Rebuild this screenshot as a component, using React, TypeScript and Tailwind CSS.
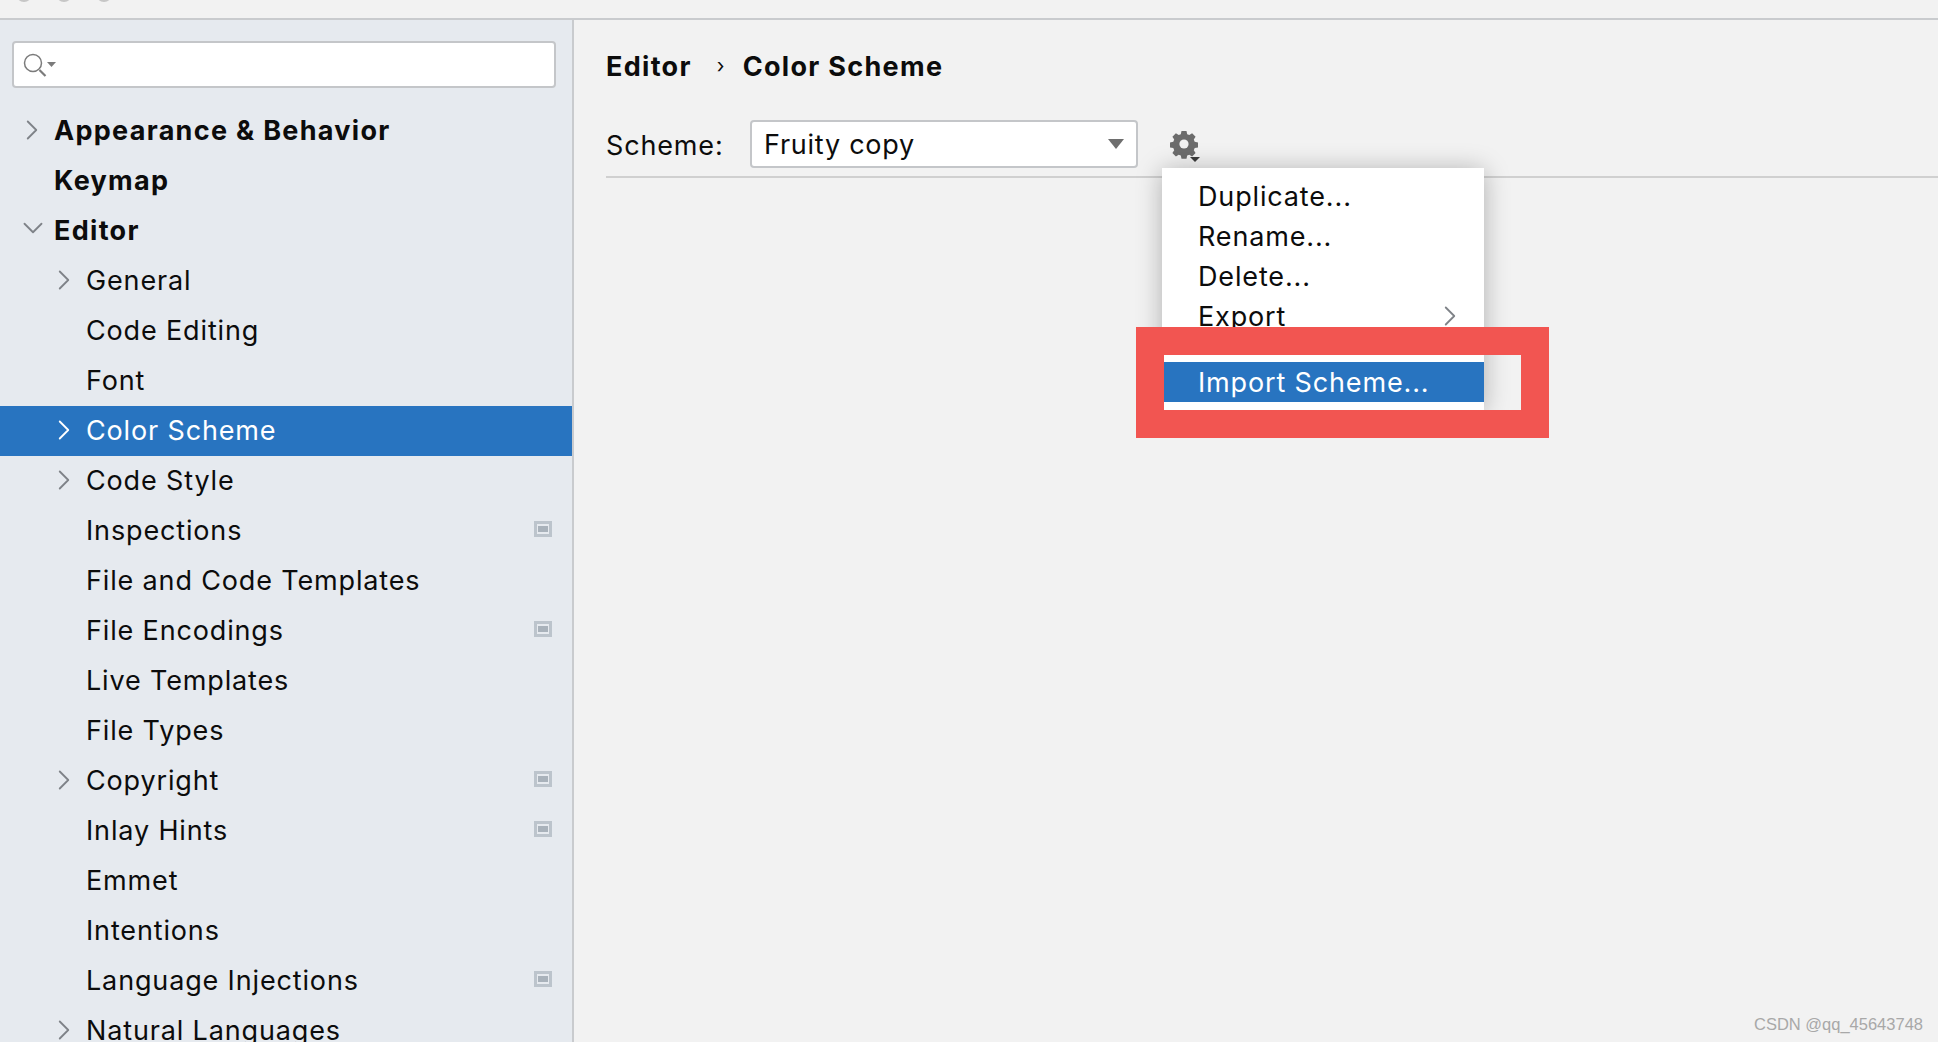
import { ChevronDown, ChevronRight } from "lucide-react";

interface TreeRow {
  label: string;
  level: 0 | 1;
  arrow?: "right" | "down";
  badge?: boolean;
  selected?: boolean;
}

const rows: TreeRow[] = [
  { label: "Appearance & Behavior", level: 0, arrow: "right" },
  { label: "Keymap", level: 0 },
  { label: "Editor", level: 0, arrow: "down" },
  { label: "General", level: 1, arrow: "right" },
  { label: "Code Editing", level: 1 },
  { label: "Font", level: 1 },
  { label: "Color Scheme", level: 1, arrow: "right", selected: true },
  { label: "Code Style", level: 1, arrow: "right" },
  { label: "Inspections", level: 1, badge: true },
  { label: "File and Code Templates", level: 1 },
  { label: "File Encodings", level: 1, badge: true },
  { label: "Live Templates", level: 1 },
  { label: "File Types", level: 1 },
  { label: "Copyright", level: 1, arrow: "right", badge: true },
  { label: "Inlay Hints", level: 1, badge: true },
  { label: "Emmet", level: 1 },
  { label: "Intentions", level: 1 },
  { label: "Language Injections", level: 1, badge: true },
  { label: "Natural Languages", level: 1, arrow: "right" },
];

function Row({ row }: { row: TreeRow }) {
  return (
    <div
      className={`relative flex h-[50px] shrink-0 items-center pr-[20px] ${row.level === 0 ? "pl-[54px] font-bold tracking-[1.3px]" : "pl-[86px] tracking-[0.85px]"} ${row.selected ? "bg-[#2874c0] text-white" : "text-[#0c0c0c]"}`}
    >
      {row.arrow === "right" && (
        <ChevronRight
          size={34}
          strokeWidth={1.3}
          className={`absolute top-[7px] ${row.level === 0 ? "left-[15px]" : "left-[47px]"} ${row.selected ? "text-white" : "text-[#7f8388]"}`}
        />
      )}
      {row.arrow === "down" && (
        <ChevronDown size={34} strokeWidth={1.3} className="absolute left-[16px] top-[5px] text-[#7f8388]" />
      )}
      <span className="flex-1 pb-[2px] text-[27px] leading-none">{row.label}</span>
      {row.badge && (
        <span className="mb-[4px] flex h-[16px] w-[18px] items-center justify-center bg-[#bcc4cc]">
          <span className="flex h-[10px] w-[12px] items-center justify-center bg-[#e6eaef]">
            <span className="h-[6px] w-[10px] bg-[#a9b2bb]" />
          </span>
        </span>
      )}
    </div>
  );
}

function GearIcon() {
  return (
    <svg width="38" height="38" viewBox="0 0 38 38" className="block">
      <path
        fill="#6c6c6c"
        d="M13.5 3h5l.7 3.2 2.1.9 2.8-1.8 3.5 3.5-1.8 2.8.9 2.1 3.3.7v5l-3.3.7-.9 2.1 1.8 2.8-3.5 3.5-2.8-1.8-2.1.9-.7 3.2h-5l-.7-3.2-2.1-.9-2.8 1.8-3.5-3.5 1.8-2.8-.9-2.1-3.3-.7v-5l3.3-.7.9-2.1-1.8-2.8 3.5-3.5 2.8 1.8 2.1-.9z"
      />
      <circle cx="16" cy="16" r="4.6" fill="#f2f2f2" />
      <path d="M22 29h10l-5 5z" fill="#3c3c3c" />
    </svg>
  );
}

function Menu() {
  const itemClass = "flex h-[40px] items-center justify-between pl-[36px] pr-[17px] text-[27px] leading-none tracking-[0.85px]";
  return (
    <div className="absolute left-[1162px] top-[168px] w-[322px] bg-white pb-[8px] pt-[8px] text-[#0c0c0c] shadow-[0_2px_24px_rgba(0,0,0,0.28)]">
      <div className={itemClass}>Duplicate...</div>
      <div className={itemClass}>Rename...</div>
      <div className={itemClass}>Delete...</div>
      <div className={itemClass}>
        Export
        <ChevronRight size={34} strokeWidth={1.3} className="text-[#7f8388]" />
      </div>
      <div className="h-[26px]" />
      <div className={`${itemClass} bg-[#2874c0] text-white`}>Import Scheme...</div>
    </div>
  );
}

export default function App() {
  return (
    <div className="relative flex h-screen flex-col overflow-hidden bg-[#f2f2f2] font-['Inter',sans-serif]">
      {/* Title bar */}
      <div className="flex h-[20px] shrink-0 gap-[24px] overflow-hidden border-b-2 border-[#c9cbce] pl-[16px]">
        <span className="-mt-[14px] size-[16px] rounded-full border-2 border-[#c6c6c6]" />
        <span className="-mt-[14px] size-[16px] rounded-full border-2 border-[#c6c6c6]" />
        <span className="-mt-[14px] size-[16px] rounded-full border-2 border-[#c6c6c6]" />
      </div>

      <div className="flex min-h-0 flex-1">
        {/* Settings tree */}
        <div className="w-[574px] shrink-0 overflow-hidden border-r-2 border-[#c9cbce] bg-[#e6eaef]">
          <div className="mx-[12px] mb-[18px] mt-[21px] flex h-[47px] w-[544px] items-center rounded-[4px] border-2 border-[#c4c6c9] bg-white pl-[8px]">
            <svg width="36" height="30" viewBox="0 0 36 30">
              <circle cx="11" cy="13" r="8.5" fill="none" stroke="#7b7b7b" strokeWidth="1.5" />
              <path d="M17.5 20l6 6" stroke="#7b7b7b" strokeWidth="2.2" />
              <path d="M25 12h9l-4.5 5z" fill="#7b7b7b" />
            </svg>
          </div>
          {rows.map((row) => (
            <Row key={row.label} row={row} />
          ))}
        </div>

        {/* Color scheme page */}
        <div className="flex-1 pl-[32px]">
          <div className="flex h-[92px] items-center text-[27px] font-bold leading-none tracking-[1.3px] text-[#0c0c0c]">
            <span>Editor</span>
            <span className="ml-[25px] mr-[17px] text-[20px] font-normal">›</span>
            <span>Color Scheme</span>
          </div>
          <div className="flex h-[66px] items-start border-b-2 border-[#d0d0d0] pt-[8px]">
            <span className="mt-[12px] w-[144px] text-[27px] leading-none tracking-[0.85px] text-[#0c0c0c]">Scheme:</span>
            <div className="flex h-[48px] w-[388px] items-center justify-between rounded-[4px] border-2 border-[#c4c6c9] bg-white px-[12px] text-[27px] leading-none tracking-[0.75px] text-[#0c0c0c]">
              <span>Fruity copy</span>
              <span className="h-0 w-0 border-x-[8px] border-t-[10px] border-x-transparent border-t-[#6e6e6e]" />
            </div>
            <div className="ml-[30px] mt-[8px]">
              <GearIcon />
            </div>
          </div>
        </div>
      </div>

      <Menu />

      {/* Red annotation frame */}
      <div className="pointer-events-none absolute left-[1136px] top-[327px] h-[111px] w-[413px] border-[28px] border-[#f25551]" />

      <div className="absolute right-[15px] top-[1015px] font-['Liberation_Sans',sans-serif] text-[16.5px] leading-[18px] text-[#a8a8a8]">
        CSDN @qq_45643748
      </div>
    </div>
  );
}
